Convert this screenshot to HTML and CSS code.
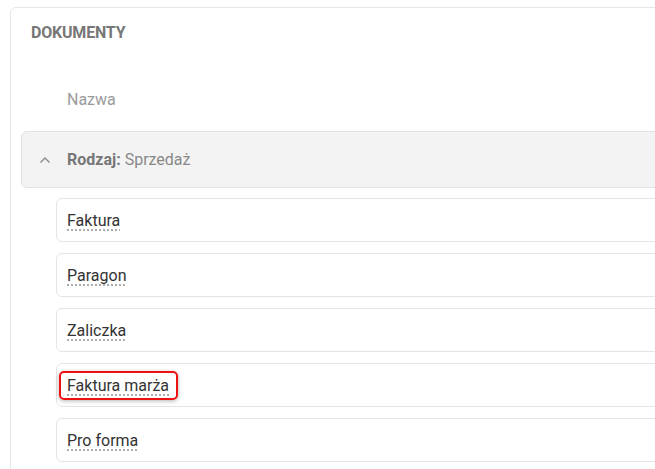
FILE: index.html
```html
<!DOCTYPE html>
<html lang="pl">
<head>
    <meta charset="UTF-8">
    <meta name="viewport" content="width=device-width, initial-scale=1.0">
    <title>Dokumenty</title>
    <link rel="stylesheet" href="styles.css">
</head>
<body>

<div class="card">
    <h2 class="card-title">DOKUMENTY</h2>

    <div class="col-head">Nazwa</div>

    <div class="group">
        <div class="group-head">
            <svg class="chevron" width="12" height="8" viewBox="0 0 12 8"><path d="M1.5 6.5 L6 2 L10.5 6.5" fill="none" stroke="#8a8a8a" stroke-width="1.4"/></svg>
            <span class="group-label"><b>Rodzaj:</b> Sprzedaż</span>
        </div>
        <div class="rows">
            <div class="row"><span class="doc">Faktura</span></div>
            <div class="row"><span class="doc">Paragon</span></div>
            <div class="row"><span class="doc">Zaliczka</span></div>
            <div class="row"><span class="doc-mark"><span class="doc">Faktura marża</span></span></div>
            <div class="row"><span class="doc">Pro forma</span></div>
        </div>
    </div>
</div>

</body>
</html>
```

FILE: styles.css
```css
html, body { margin: 0; padding: 0; background: #fff; overflow: hidden; height: 469px; }
body { font-family: Roboto, "Noto Sans", sans-serif; color: #333; }
.card { margin: 7px 0 0 10px; width: 720px; height: 520px; border: 1px solid #e6e6e6; border-radius: 6px; box-sizing: border-box; padding: 0 0 0 10px; }
.card-title { margin: 0; padding: 15px 0 0 10px; font-size: 16px; line-height: 20px; font-weight: 700; color: #777; letter-spacing: -0.2px; }
.col-head { padding: 0 0 0 46px; height: 51px; margin-top: 37px; line-height: 40px; font-size: 16px; color: #9a9a9a; }
.group-head { display: flex; align-items: center; height: 55px; background: #f3f3f3; border: 1px solid #e2e2e2; border-radius: 6px; padding-left: 17px; }
.chevron { margin-right: 16px; }
.group-label { font-size: 16px; color: #888; }
.group-label b { color: #777; font-weight: 700; }
.rows { display: flex; flex-direction: column; gap: 11px; margin: 10px 0 0 35px; }
.row { height: 42px; border: 1px solid #e4e4e4; border-radius: 6px; display: flex; align-items: center; padding-left: 10px; }
.doc { font-size: 16px; color: #333; text-decoration: underline dotted #999; text-underline-offset: 4px; }
.doc-mark { border: 2px solid #ee1111; border-radius: 5px; padding: 3px 7px 3px 6px; margin-left: -8px; box-shadow: 0 1px 4px rgba(0, 0, 0, 0.3); }
```
